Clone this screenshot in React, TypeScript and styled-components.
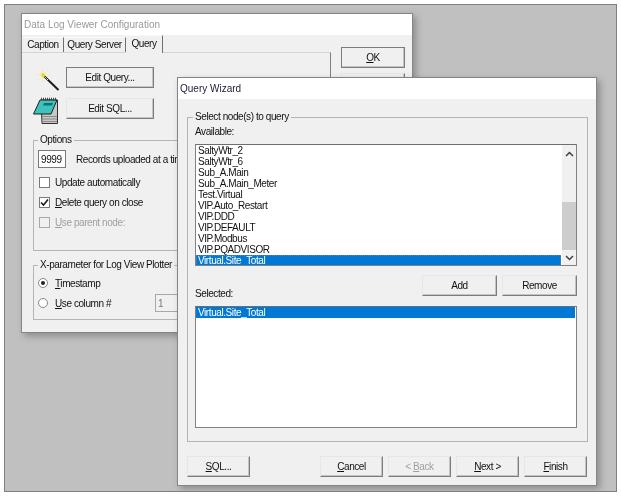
import React from 'react'
import styled, { createGlobalStyle } from 'styled-components'

const GlobalStyle = createGlobalStyle`
  html, body {
    margin: 0;
    background: #ffffff;
  }
  body {
    font-family: "Liberation Sans", Arial, sans-serif;
    font-size: 10px;
    letter-spacing: -0.42px;
    color: #111111;
  }
  u {
    text-underline-offset: 1px;
  }
`

const Desktop = styled.div`
  position: relative;
  box-sizing: border-box;
  width: 613px;
  height: 488px;
  margin: 4px 0 0 4px;
  background: #c0c0c0;
  border: 1px solid #808080;
  overflow: hidden;
  filter: blur(0.25px);
`

const Window = styled.div<{ $left: number; $top: number; $w: number; $h: number }>`
  position: absolute;
  left: ${p => p.$left}px;
  top: ${p => p.$top}px;
  width: ${p => p.$w}px;
  height: ${p => p.$h}px;
  box-sizing: border-box;
  display: flex;
  flex-direction: column;
  background: #f0f0f0;
  border: 1px solid #858585;
  box-shadow: 3px 3px 7px rgba(0, 0, 0, 0.28);
`

const TitleBar = styled.div<{ $inactive?: boolean }>`
  flex: none;
  height: 21px;
  display: flex;
  align-items: center;
  padding-left: 2px;
  background: #ffffff;
  font-size: 10px;
  letter-spacing: 0;
  color: ${p => (p.$inactive ? '#9a9a9a' : '#1c1c3a')};
`

const ConfigBody = styled.div`
  flex: 1;
  display: flex;
  min-height: 0;
`

const TabArea = styled.div`
  width: 309px;
  display: flex;
  flex-direction: column;
`

const TabRow = styled.div`
  height: 17px;
  display: flex;
  align-items: flex-end;
  padding-left: 1px;
`

const Tab = styled.div<{ $w: number; $active?: boolean }>`
  box-sizing: border-box;
  width: ${p => p.$w}px;
  height: ${p => (p.$active ? 18 : 15)}px;
  display: flex;
  align-items: center;
  justify-content: center;
  padding-bottom: ${p => (p.$active ? 2 : 1)}px;
  margin-bottom: ${p => (p.$active ? -1 : 0)}px;
  background: #f0f0f0;
  border-top: 1px solid #f8f8f8;
  border-right: 1px solid #707070;
  position: relative;
  z-index: ${p => (p.$active ? 1 : 0)};
`

const TabPanel = styled.div`
  flex: 1;
  box-sizing: border-box;
  padding: 14px 0 0 11px;
  border-top: 1px solid #d4d4d4;
  border-right: 1px solid #808080;
`

const ActionRow = styled.div`
  display: flex;
  align-items: center;
  height: 21px;
  margin-bottom: 10px;
`

const IconSlot = styled.div`
  width: 33px;
  height: 21px;
  display: flex;
  align-items: center;
  justify-content: center;
`

const WandGlyph = styled.svg`
  flex: none;
  margin-top: 3px;
`

const NotepadGlyph = styled.svg`
  flex: none;
  margin: 4px 6px 0 0;
`

const Button = styled.div<{ $w: number; $primary?: boolean; $disabled?: boolean }>`
  box-sizing: border-box;
  width: ${p => p.$w}px;
  height: 21px;
  flex: none;
  display: flex;
  align-items: center;
  justify-content: center;
  background: #f0f0f0;
  color: ${p => (p.$disabled ? '#a0a0a0' : '#111111')};
  border: 1px solid ${p => (p.$primary ? '#7c7c7c' : '#e6e6e6')};
  border-right-color: #7c7c7c;
  border-bottom-color: #7c7c7c;
  box-shadow: inset -1px -1px 0 #c4c4c4;
`

const SideColumn = styled.div`
  display: flex;
  flex-direction: column;
  gap: 5px;
  padding: 12px 0 0 10px;
`

const Group = styled.fieldset<{ $h: number; $w: number }>`
  box-sizing: border-box;
  width: ${p => p.$w}px;
  height: ${p => p.$h}px;
  margin: 0;
  border: 1px solid #b4b4b4;
  min-width: 0;
`

const OptionsGroup = styled(Group)`
  margin-top: 15px;
  padding: 4px 0 0 4px;
`

const PlotterGroup = styled(Group)`
  margin-top: 8px;
  padding: 2px 0 0 4px;
`

const WizardGroup = styled(Group)`
  flex: none;
  padding: 3px 10px 0 7px;
`

const Caption = styled.legend<{ $shift?: number }>`
  height: 12px;
  line-height: 12px;
  margin-left: ${p => p.$shift ?? 0}px;
  padding: 0 2px;
`

const RecordsRow = styled.div`
  display: flex;
  align-items: center;
  height: 18px;
  margin-bottom: 4px;
  gap: 10px;
  white-space: nowrap;
`

const NumberBox = styled.div<{ $w: number; $muted?: boolean }>`
  box-sizing: border-box;
  width: ${p => p.$w}px;
  height: 18px;
  flex: none;
  display: flex;
  align-items: center;
  padding-left: 2px;
  background: ${p => (p.$muted ? '#f0f0f0' : '#ffffff')};
  color: ${p => (p.$muted ? '#777777' : '#111111')};
  border: 1px solid ${p => (p.$muted ? '#a8a8a8' : '#7a7a7a')};
`

const OptionRow = styled.div<{ $disabled?: boolean }>`
  height: 20px;
  display: flex;
  align-items: center;
  padding-left: 1px;
  gap: 5px;
  white-space: nowrap;
  color: ${p => (p.$disabled ? '#a0a0a0' : '#111111')};
`

const CheckBox = styled.div<{ $disabled?: boolean }>`
  box-sizing: border-box;
  width: 11px;
  height: 11px;
  display: flex;
  align-items: center;
  justify-content: center;
  background: ${p => (p.$disabled ? '#f0f0f0' : '#ffffff')};
  border: 1px solid ${p => (p.$disabled ? '#a8a8a8' : '#7a7a7a')};
`

const RadioRow = styled.div`
  height: 20px;
  display: flex;
  align-items: center;
  gap: 7px;
  white-space: nowrap;
`

const Radio = styled.div`
  box-sizing: border-box;
  width: 10px;
  height: 10px;
  display: flex;
  align-items: center;
  justify-content: center;
  border-radius: 50%;
  background: #ffffff;
  border: 1px solid #8a8a8a;
`

const RadioDot = styled.div`
  width: 4px;
  height: 4px;
  border-radius: 50%;
  background: #222222;
`

const RadioLabel = styled.span<{ $w?: number }>`
  width: ${p => (p.$w ? `${p.$w}px` : 'auto')};
`

const WizardBody = styled.div`
  flex: 1;
  display: flex;
  flex-direction: column;
  padding: 12px 9px 0;
`

const FieldLabel = styled.div`
  height: 12px;
  line-height: 12px;
`

const ListBox = styled.div`
  box-sizing: border-box;
  height: 122px;
  margin-top: 6px;
  display: flex;
  background: #ffffff;
  border: 1px solid #828282;
  border-top-color: #6e6e6e;
  overflow: hidden;
`

const ListRows = styled.div`
  flex: 1;
  padding: 0 1px 0 0;
  min-width: 0;
`

const ListRow = styled.div<{ $selected?: boolean; $focused?: boolean }>`
  box-sizing: border-box;
  height: 11px;
  line-height: ${p => (p.$focused ? 9 : 11)}px;
  padding-left: ${p => (p.$focused ? 1 : 2)}px;
  white-space: nowrap;
  background: ${p => (p.$selected ? '#0078d7' : 'transparent')};
  color: ${p => (p.$selected ? '#ffffff' : '#111111')};
  border: ${p => (p.$focused ? '1px dotted #7a7a7a' : '0')};
`

const ScrollBar = styled.div`
  width: 14px;
  flex: none;
  display: flex;
  flex-direction: column;
  background: #f0f0f0;
`

const ScrollArrow = styled.div<{ $h: number }>`
  height: ${p => p.$h}px;
  flex: none;
  display: flex;
  align-items: center;
  justify-content: center;
`

const ScrollGap = styled.div`
  height: 40px;
`

const ScrollThumb = styled.div`
  height: 48px;
  background: #cdcdcd;
`

const PickRow = styled.div`
  height: 25px;
  margin-top: 9px;
  display: flex;
  gap: 5px;
`

const PickLabel = styled(FieldLabel)`
  align-self: flex-end;
  margin-right: auto;
`

const Footer = styled.div`
  margin-top: 14px;
  display: flex;
  gap: 5px;
`

const FooterSpacer = styled.div`
  flex: 1;
`

const nodes = [
  'SaltyWtr_2',
  'SaltyWtr_6',
  'Sub_A.Main',
  'Sub_A.Main_Meter',
  'Test.Virtual',
  'VIP.Auto_Restart',
  'VIP.DDD',
  'VIP.DEFAULT',
  'VIP.Modbus',
  'VIP.PQADVISOR',
]

const WandIcon = () => (
  <WandGlyph width='30' height='30' viewBox='0 0 30 30'>
    <path d='M9 12L23.5 26' stroke='#1c1c1c' strokeWidth='2' />
    <path d='M8 4V18M1 11H15M3 6L13 16M13 6L3 16' stroke='#f4ee9a' strokeWidth='1' strokeDasharray='2 1' />
    <path d='M8 9V13M6 11H10' stroke='#e8d820' strokeWidth='1.6' />
  </WandGlyph>
)

const NotepadIcon = () => (
  <NotepadGlyph width='27' height='27' viewBox='0 0 27 27'>
    <path d='M8 3H24.5V26.5H9Z' fill='#c8c8c8' stroke='#303030' />
    <path d='M9 19.5H24M9 22H24M9 24.5H24' stroke='#8a8a8a' />
    <path d='M7 3H24L18 17H0.5Z' fill='#3cc4bc' stroke='#1c1c1c' />
    <path d='M11 6H20L19 8.5H10Z' fill='#0d6f70' />
    <path d='M8 2H24' stroke='#444444' strokeWidth='2.5' strokeDasharray='1 1' />
  </NotepadGlyph>
)

const Tick = () => (
  <svg width='9' height='9' viewBox='0 0 9 9'>
    <path d='M1 4.5L3.5 7L8 1.5' fill='none' stroke='#1c1c1c' strokeWidth='1.6' />
  </svg>
)

const Chevron = ({ down }: { down?: boolean }) => (
  <svg width='9' height='6' viewBox='0 0 9 6'>
    <path d={down ? 'M1 1L4.5 4.5L8 1' : 'M1 5L4.5 1.5L8 5'} fill='none' stroke='#404040' strokeWidth='1.5' />
  </svg>
)

const App = () => {
  return (
    <>
      <GlobalStyle />
      <Desktop>
        <Window $left={16} $top={8} $w={392} $h={320}>
          <TitleBar $inactive>Data Log Viewer Configuration</TitleBar>
          <ConfigBody>
            <TabArea>
              <TabRow>
                <Tab $w={41}>Caption</Tab>
                <Tab $w={62}>Query Server</Tab>
                <Tab $w={37} $active>Query</Tab>
              </TabRow>
              <TabPanel>
                <ActionRow>
                  <IconSlot>
                    <WandIcon />
                  </IconSlot>
                  <Button $w={88} $primary>Edit Query...</Button>
                </ActionRow>
                <ActionRow>
                  <IconSlot>
                    <NotepadIcon />
                  </IconSlot>
                  <Button $w={88}>Edit SQL...</Button>
                </ActionRow>
                <OptionsGroup $w={290} $h={117}>
                  <Caption>Options</Caption>
                  <RecordsRow>
                    <NumberBox $w={28}>9999</NumberBox>
                    <span>Records uploaded at a time</span>
                  </RecordsRow>
                  <OptionRow>
                    <CheckBox />
                    <span>Update automatically</span>
                  </OptionRow>
                  <OptionRow>
                    <CheckBox>
                      <Tick />
                    </CheckBox>
                    <span><u>D</u>elete query on close</span>
                  </OptionRow>
                  <OptionRow $disabled>
                    <CheckBox $disabled />
                    <span><u>U</u>se parent node:</span>
                  </OptionRow>
                </OptionsGroup>
                <PlotterGroup $w={290} $h={61}>
                  <Caption>X-parameter for Log View Plotter</Caption>
                  <RadioRow>
                    <Radio>
                      <RadioDot />
                    </Radio>
                    <RadioLabel><u>T</u>imestamp</RadioLabel>
                  </RadioRow>
                  <RadioRow>
                    <Radio />
                    <RadioLabel $w={93}><u>U</u>se column #</RadioLabel>
                    <NumberBox $w={40} $muted>1</NumberBox>
                  </RadioRow>
                </PlotterGroup>
              </TabPanel>
            </TabArea>
            <SideColumn>
              <Button $w={64} $primary><span><u>O</u>K</span></Button>
              <Button $w={64}>Cancel</Button>
            </SideColumn>
          </ConfigBody>
        </Window>

        <Window $left={172} $top={72} $w={420} $h={409}>
          <TitleBar>Query Wizard</TitleBar>
          <WizardBody>
            <WizardGroup $w={401} $h={331}>
              <Caption $shift={-2}>Select node(s) to query</Caption>
              <FieldLabel>Available:</FieldLabel>
              <ListBox>
                <ListRows>
                  {nodes.map(node => (
                    <ListRow key={node}>{node}</ListRow>
                  ))}
                  <ListRow $selected $focused>Virtual.Site_Total</ListRow>
                </ListRows>
                <ScrollBar>
                  <ScrollArrow $h={17}>
                    <Chevron />
                  </ScrollArrow>
                  <ScrollGap />
                  <ScrollThumb />
                  <ScrollArrow $h={15}>
                    <Chevron down />
                  </ScrollArrow>
                </ScrollBar>
              </ListBox>
              <PickRow>
                <PickLabel>Selected:</PickLabel>
                <Button $w={75}>Add</Button>
                <Button $w={75}>Remove</Button>
              </PickRow>
              <ListBox>
                <ListRows>
                  <ListRow $selected>Virtual.Site_Total</ListRow>
                </ListRows>
              </ListBox>
            </WizardGroup>
            <Footer>
              <Button $w={63}><span><u>S</u>QL...</span></Button>
              <FooterSpacer />
              <Button $w={63}><span><u>C</u>ancel</span></Button>
              <Button $w={63} $disabled><span>&lt; <u>B</u>ack</span></Button>
              <Button $w={63}><span><u>N</u>ext &gt;</span></Button>
              <Button $w={63}><span><u>F</u>inish</span></Button>
            </Footer>
          </WizardBody>
        </Window>
      </Desktop>
    </>
  )
}

export default App
